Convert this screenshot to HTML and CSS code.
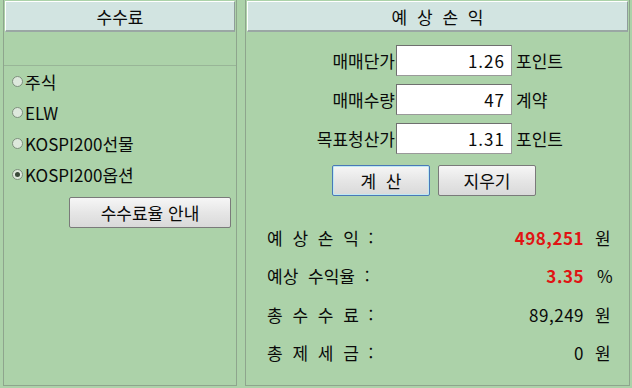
FILE: index.html
```html
<!DOCTYPE html>
<html lang="ko">
<head>
<meta charset="utf-8">
<link rel="stylesheet" href="styles.css">
</head>
<body>
<div class="wrap">
  <section class="panel left">
    <div class="head">수수료</div>
    <div class="blank"></div>
    <ul class="radios">
      <li><span class="radio"></span>주식</li>
      <li><span class="radio"></span>ELW</li>
      <li><span class="radio"></span>KOSPI200선물</li>
      <li><span class="radio on"></span>KOSPI200옵션</li>
    </ul>
    <div class="guide-row"><button class="btn guide">수수료율 안내</button></div>
  </section>
  <section class="panel right">
    <div class="head spaced">예 상 손 익</div>
    <div class="form">
      <label class="lbl">매매단가</label><div class="inp">1.26</div><span class="unit">포인트</span>
      <label class="lbl">매매수량</label><div class="inp">47</div><span class="unit">계약</span>
      <label class="lbl">목표청산가</label><div class="inp">1.31</div><span class="unit">포인트</span>
    </div>
    <div class="actions">
      <button class="btn calc spaced">계 산</button>
      <button class="btn">지우기</button>
    </div>
    <div class="results">
      <span class="rl spaced">예 상 손 익 :</span><span class="rv red">498,251</span><span class="ru">원</span>
      <span class="rl spaced">예상 수익율 :</span><span class="rv red">3.35</span><span class="ru pct">%</span>
      <span class="rl spaced">총 수 수 료 :</span><span class="rv">89,249</span><span class="ru">원</span>
      <span class="rl spaced">총 제 세 금 :</span><span class="rv">0</span><span class="ru">원</span>
    </div>
  </section>
</div>
</body>
</html>
```

FILE: styles.css
```css
* { box-sizing: border-box; }
html, body {
  margin: 0;
  padding: 0;
}
body {
  width: 632px;
  height: 388px;
  overflow: hidden;
  background: #acd2a9;
  font-family: "Noto Sans CJK KR", "Noto Sans", sans-serif;
  font-size: 17px;
  color: #0a0a0a;
}
.spaced { word-spacing: 5px; }
.wrap {
  display: flex;
  gap: 8px;
  padding-left: 3px;
}
.panel {
  height: 386px;
  border: 1px solid #8ea58d;
  border-top: none;
  display: flex;
  flex-direction: column;
}
.left { width: 234px; }
.right { width: 385px; }
.head {
  margin: 1px 1px 0 1px;
  height: 31px;
  background: #d2e4e1;
  border-top: 1px solid #ffffff;
  border-left: 1px solid #ffffff;
  border-right: 1px solid #8f9c9a;
  border-bottom: 2px solid #9aa7a4;
  display: flex;
  align-items: center;
  justify-content: center;
  font-size: 17px;
  line-height: 1;
}
.blank {
  height: 34px;
  border-bottom: 1px solid #98b597;
}
.radios {
  list-style: none;
  margin: 0;
  padding: 0 0 0 8px;
  display: flex;
  flex-direction: column;
}
.radios li {
  height: 31px;
  display: flex;
  align-items: center;
  gap: 2px;
  line-height: 1;
}
.radio {
  width: 11px;
  height: 11px;
  border-radius: 50%;
  border: 1px solid #7d8f7c;
  background: #dde8dc;
  display: inline-flex;
  align-items: center;
  justify-content: center;
}
.radio.on::after {
  content: "";
  width: 5px;
  height: 5px;
  border-radius: 50%;
  background: #3a4a3a;
}
.guide-row {
  display: flex;
  justify-content: flex-end;
  padding: 7px 5px 0 0;
}
.btn {
  font-family: "Noto Sans CJK KR", "Noto Sans", sans-serif;
  font-size: 17px;
  color: #0a0a0a;
  height: 31px;
  padding: 0;
  border: 1px solid #7a7a7a;
  border-radius: 2px;
  background: linear-gradient(#f6f6f6, #e6e6e6 50%, #d9d9d9);
  line-height: 1;
}
.guide { width: 162px; }
.form {
  display: grid;
  grid-template-columns: 150px 116px auto;
  row-gap: 8px;
  align-items: center;
  margin-top: 13px;
}
.lbl {
  text-align: right;
  padding-right: 1px;
  line-height: 1;
}
.inp {
  height: 31px;
  background: #fff;
  border: 1px solid #6f6f6f;
  border-right-color: #9a9a9a;
  border-bottom-color: #9a9a9a;
  display: flex;
  align-items: center;
  justify-content: flex-end;
  padding-right: 6px;
  letter-spacing: 1px;
  line-height: 1;
}
.unit {
  padding-left: 4px;
  line-height: 1;
}
.actions {
  display: flex;
  gap: 8px;
  margin: 11px 0 0 86px;
}
.actions .btn { width: 98px; }
.btn.calc {
  border-color: #4a78b8;
  box-shadow: inset 0 0 0 1px #bfe8f2;
}
.results {
  display: grid;
  grid-template-columns: 1fr auto 30px;
  grid-auto-rows: 38.5px;
  align-items: center;
  padding: 22px 15px 0 21px;
  line-height: 1;
}
.rv { text-align: right; letter-spacing: 0.5px; }
.ru { padding-left: 11px; }
.ru.pct { padding-left: 13px; }
.red { color: #e01414; font-weight: bold; }
```
